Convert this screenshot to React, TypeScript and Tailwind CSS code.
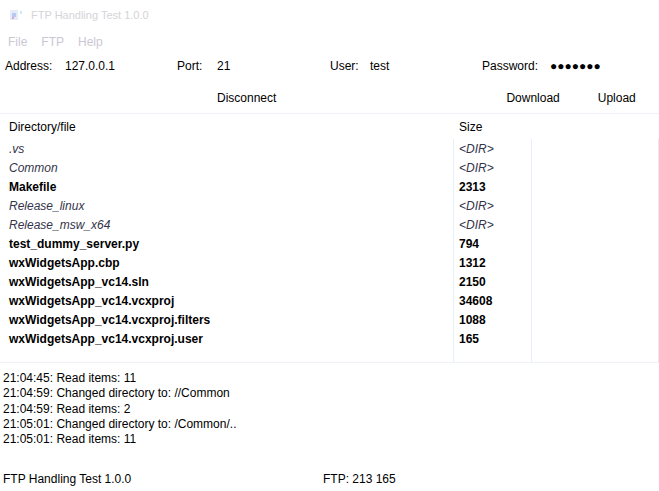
import React from 'react';

const files = [
  { name: '.vs', size: '<DIR>', dir: true },
  { name: 'Common', size: '<DIR>', dir: true },
  { name: 'Makefile', size: '2313', dir: false },
  { name: 'Release_linux', size: '<DIR>', dir: true },
  { name: 'Release_msw_x64', size: '<DIR>', dir: true },
  { name: 'test_dummy_server.py', size: '794', dir: false },
  { name: 'wxWidgetsApp.cbp', size: '1312', dir: false },
  { name: 'wxWidgetsApp_vc14.sln', size: '2150', dir: false },
  { name: 'wxWidgetsApp_vc14.vcxproj', size: '34608', dir: false },
  { name: 'wxWidgetsApp_vc14.vcxproj.filters', size: '1088', dir: false },
  { name: 'wxWidgetsApp_vc14.vcxproj.user', size: '165', dir: false },
];

const log = [
  '21:04:45: Read items: 11',
  '21:04:59: Changed directory to: //Common',
  '21:04:59: Read items: 2',
  '21:05:01: Changed directory to: /Common/..',
  '21:05:01: Read items: 11',
];

export default function App() {
  return (
    <div className="w-[659px] h-[491px] bg-white overflow-hidden flex flex-col text-[12px] text-black font-['Liberation_Sans',Arial,sans-serif]">
      {/* Title bar */}
      <div className="h-[30px] flex items-center pl-[10px] gap-[9px] shrink-0">
        <svg width="12" height="10" viewBox="0 0 12 10">
          <rect x="0" y="0" width="8" height="10" fill="#e4ecfa" />
          <rect x="2" y="3" width="4" height="4" fill="#b8c8f0" />
          <rect x="2" y="7" width="2" height="2" fill="#e0a0d0" />
          <rect x="10" y="1" width="2" height="3" fill="#c8ecf0" />
        </svg>
        <span className="text-[#d4d4d8] text-[11px]">FTP Handling Test 1.0.0</span>
      </div>

      {/* Menu */}
      <div className="h-[24px] flex items-center pl-[8px] gap-[14px] text-[#cbc7d4] shrink-0">
        <span>File</span>
        <span>FTP</span>
        <span>Help</span>
      </div>

      {/* Connection fields */}
      <div className="h-[24px] flex items-center shrink-0">
        <span className="w-[65px] pl-[5px]">Address:</span>
        <span className="w-[112px]">127.0.0.1</span>
        <span className="w-[40px]">Port:</span>
        <span className="w-[113px]">21</span>
        <span className="w-[40px]">User:</span>
        <span className="w-[112px]">test</span>
        <span className="w-[68px]">Password:</span>
        <span className="text-[12px] leading-none">●●●●●●●</span>
      </div>

      {/* Buttons */}
      <div className="h-[24px] mt-[8px] flex items-center shrink-0">
        <span className="ml-[217px]">Disconnect</span>
        <span className="ml-[230px]">Download</span>
        <span className="ml-[38px]">Upload</span>
      </div>

      {/* File list */}
      <div className="h-[250px] mt-[3px] border-y border-[#eef1f8] flex flex-col shrink-0">
        <div className="h-[25px] flex items-center shrink-0">
          <span className="w-[453px] pl-[9px]">Directory/file</span>
          <span className="pl-[6px]">Size</span>
        </div>
        <div className="flex-1 flex">
          <div className="w-[453px] flex flex-col">
            {files.map((f) => (
              <div
                key={f.name}
                className={`h-[19px] flex items-center pl-[9px] ${f.dir ? 'italic text-[#34344a]' : 'font-bold'}`}
              >
                {f.name}
              </div>
            ))}
          </div>
          <div className="w-[79px] border-x border-[#e6eefa] flex flex-col">
            {files.map((f) => (
              <div
                key={f.name}
                className={`h-[19px] flex items-center pl-[5px] ${f.dir ? 'italic text-[#34344a]' : 'font-bold'}`}
              >
                {f.size}
              </div>
            ))}
          </div>
          <div className="flex-1 border-r border-[#e8e8e8]" />
        </div>
      </div>

      {/* Log */}
      <div className="flex-1 pt-[8px] pl-[3px] flex flex-col leading-[15.25px]">
        {log.map((l, i) => (
          <div key={i}>{l}</div>
        ))}
      </div>

      {/* Status bar */}
      <div className="h-[23px] flex items-center shrink-0 pb-[2px]">
        <span className="w-[323px] pl-[3px]">FTP Handling Test 1.0.0</span>
        <span>FTP: 213 165</span>
      </div>
    </div>
  );
}
